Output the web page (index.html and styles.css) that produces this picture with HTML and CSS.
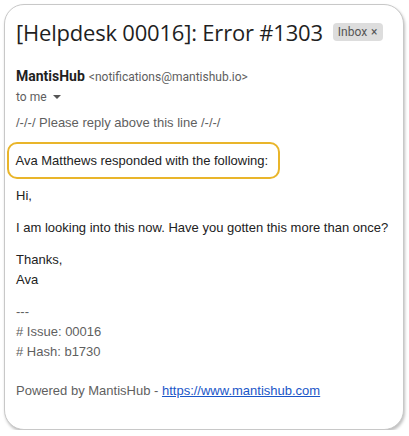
FILE: index.html
```html
<!DOCTYPE html>
<html>
<head>
<meta charset="utf-8">
<link rel="stylesheet" href="styles.css">
</head>
<body>
<div class="card">
  <div class="subject-row">
    <h1 class="subject">[Helpdesk 00016]: Error #1303</h1>
    <span class="chip">Inbox <span class="chip-x">×</span></span>
  </div>
  <div class="sender">
    <span class="sender-name">MantisHub</span>
    <span class="sender-email">&lt;notifications@mantishub.io&gt;</span>
  </div>
  <div class="recipient">to me <svg class="caret" width="8" height="5" viewBox="0 0 8 5"><path d="M0 0h8L4 4z" fill="#555"/></svg></div>
  <div class="body">
    <p class="muted reply-line">/-/-/ Please reply above this line /-/-/</p>
    <div class="highlight">Ava Matthews responded with the following:</div>
    <p>Hi,</p>
    <p>I am looking into this now. Have you gotten this more than once?</p>
    <p>Thanks,<br>Ava</p>
    <p class="muted meta">---<br># Issue: 00016<br># Hash: b1730</p>
    <p class="muted">Powered by MantisHub - <a href="#" class="link">https://www.mantishub.com</a></p>
  </div>
</div>
</body>
</html>
```

FILE: styles.css
```css
html, body {
  margin: 0;
  padding: 0;
  background: #fff;
}
body {
  padding: 4px 4px 0 4px;
  font-family: "Liberation Sans", Arial, sans-serif;
}
.card {
  width: 400px;
  height: 426px;
  box-sizing: border-box;
  border: 1px solid #c8c8c8;
  border-radius: 20px;
  box-shadow: 1px 2px 3px rgba(0,0,0,0.25);
  padding: 11px 11px 0 11px;
  background: #fff;
}
.subject-row {
  display: flex;
  align-items: center;
  gap: 10px;
}
.subject {
  margin: 0;
  font-family: "Open Sans", Roboto, sans-serif;
  font-weight: 400;
  font-size: 22px;
  line-height: 32px;
  color: #1f1f1f;
  letter-spacing: -0.2px;
}
.chip {
  background: #dddddd;
  border-radius: 4px;
  font-family: Roboto, sans-serif;
  font-size: 12px;
  color: #555;
  padding: 1px 5px;
  line-height: 16px;
  margin-top: -1px;
}
.chip-x {
  font-size: 12px;
  margin-left: 1px;
}
.sender {
  margin-top: 18px;
  font-family: Roboto, sans-serif;
  line-height: 20px;
}
.sender-name {
  font-weight: 700;
  font-size: 14px;
  color: #1f1f1f;
}
.sender-email {
  font-size: 12px;
  color: #5e5e5e;
}
.recipient {
  font-family: Roboto, sans-serif;
  font-size: 12px;
  color: #5e5e5e;
  line-height: 20px;
  display: flex;
  align-items: center;
  gap: 6px;
}
.body {
  margin-top: 6px;
  font-size: 13px;
  line-height: 20px;
  color: #222;
}
.body p {
  margin: 0 0 12px 0;
}
.body p.reply-line {
  margin-bottom: 9px;
}
.body p.meta {
  margin-bottom: 19px;
}
.muted {
  color: #5f5f5f;
}
.highlight {
  margin: 0 0 7px -9px;
  width: 273px;
  box-sizing: border-box;
  border: 2.5px solid #e9b52a;
  border-radius: 10px;
  padding: 7px 0 7px 6.5px;
  line-height: 19px;
}
.link {
  color: #1a56c8;
}
```
